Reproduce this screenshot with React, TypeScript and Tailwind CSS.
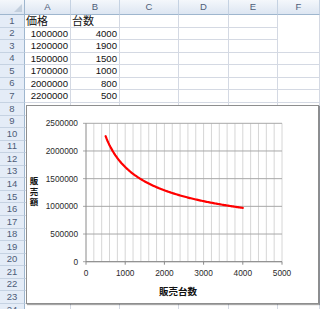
import React from 'react';

const colA = ['価格', '1000000', '1200000', '1500000', '1700000', '2000000', '2200000'];
const colB = ['台数', '4000', '1900', '1500', '1000', '800', '500'];
const letters = ['A', 'B', 'C', 'D', 'E', 'F'];
const ROWS = 24;

const num = "'Liberation Sans', Arial, sans-serif";
const jp = "'Noto Sans CJK JP', 'Liberation Sans', sans-serif";

// chart box inner origin on the page
const OX = 27;
const OY = 106;
const X = (u: number) => 86 + (u / 5000) * 196 - OX;
const Y = (v: number) => 261.7 - (v / 2500000) * 138.4 - OY;

const curve = (() => {
  const pts: string[] = [];
  for (let u = 500; u <= 4000; u += 25) {
    const v = Math.exp(0.4332 - 0.4073 * (Math.log(u) - 7.161)) * 1e6;
    pts.push(`${X(u).toFixed(2)},${Y(v).toFixed(2)}`);
  }
  return 'M' + pts.join(' L');
})();

const Chart: React.FC = () => {
  const vLines: number[] = [];
  for (let u = 200; u <= 5000; u += 200) vLines.push(u);
  const hVals = [0, 500000, 1000000, 1500000, 2000000, 2500000];
  const xVals = [0, 1000, 2000, 3000, 4000, 5000];
  return (
    <div className="absolute left-[26px] top-[105px] w-[293px] h-[199px] bg-white border border-[#8e8e8e] shadow-[1px_1px_1px_rgba(0,0,0,0.35)]">
      <svg width="291" height="197" className="block">
        {vLines.map((u) => (
          <line key={u} x1={X(u)} x2={X(u)} y1={Y(2500000)} y2={Y(0)} stroke="#d6d6d6" strokeWidth="1" />
        ))}
        {hVals.map((v) => (
          <line key={v} x1={X(0) - 3} x2={X(5000)} y1={Y(v)} y2={Y(v)} stroke="#a8a8a8" strokeWidth="1" />
        ))}
        <line x1={X(0)} x2={X(0)} y1={Y(2500000)} y2={Y(0)} stroke="#8a8a8a" strokeWidth="1" />
        <line x1={X(0)} x2={X(5000)} y1={Y(0)} y2={Y(0)} stroke="#8a8a8a" strokeWidth="1" />
        {xVals.map((u) => (
          <line key={u} x1={X(u)} x2={X(u)} y1={Y(0)} y2={Y(0) + 3} stroke="#8a8a8a" strokeWidth="1" />
        ))}
        {hVals.map((v) => (
          <text key={v} x={51} y={Y(v) + 3} textAnchor="end" fontSize="8.3" fill="#2a2a2a" fontFamily={num}>
            {v}
          </text>
        ))}
        {xVals.map((u) => (
          <text key={u} x={X(u)} y={170} textAnchor="middle" fontSize="8.3" fill="#2a2a2a" fontFamily={num}>
            {u}
          </text>
        ))}
        <path d={curve} fill="none" stroke="#ff0000" strokeWidth="2.2" strokeLinecap="round" />
        {['販', '売', '額'].map((c, i) => (
          <text key={c} x={7} y={78 + i * 10.5} textAnchor="middle" fontSize="8.5" fontWeight="700" fill="#111" fontFamily={jp}>
            {c}
          </text>
        ))}
        <text x={151} y={189} textAnchor="middle" fontSize="9.5" fontWeight="700" fill="#111" fontFamily={jp}>
          販売台数
        </text>
      </svg>
    </div>
  );
};

export default function App() {
  const rows = Array.from({ length: ROWS }, (_, i) => i + 1);
  return (
    <div className="relative w-[320px] h-[309px] overflow-hidden bg-white">
      <div className="grid grid-cols-[25px_46px_49px_59px_50px_49px_1fr] grid-rows-[15px_repeat(24,12.57px)]">
        <div className="relative bg-gradient-to-b from-[#f4f7fb] to-[#dde6f2] border-r border-b border-[#9eb6ce]">
          <div className="absolute right-[2px] bottom-[2px] w-0 h-0 border-l-[8px] border-l-transparent border-b-[8px] border-b-[#c3cfdd]" />
        </div>
        {letters.map((l) => (
          <div
            key={l}
            className="flex items-center justify-center bg-gradient-to-b from-[#f4f7fb] to-[#dde6f2] border-r border-b border-r-[#c5d2e2] border-b-[#9eb6ce] text-[9.5px] text-[#4e5d78]"
            style={{ fontFamily: num }}
          >
            {l}
          </div>
        ))}
        {rows.map((r) => (
          <React.Fragment key={r}>
            <div
              className="flex items-center justify-center bg-[#e4ecf7] border-r border-b border-r-[#9eb6ce] border-b-[#c5d2e2] text-[9.5px] text-[#4e5d78]"
              style={{ fontFamily: num }}
            >
              {r}
            </div>
            {letters.map((l, ci) => {
              const text = r <= 7 ? (ci === 0 ? colA[r - 1] : ci === 1 ? colB[r - 1] : '') : '';
              const isHead = r === 1;
              const noBottom = ci === 5 && r <= 2;
              return (
                <div
                  key={l}
                  className={`flex items-center border-r border-[#d4d9e3] ${noBottom ? '' : 'border-b'} ${
                    isHead ? 'justify-start pl-[1px] text-[11px]' : 'justify-end pr-[2px] text-[9.6px]'
                  } text-[#111] leading-none`}
                  style={{ fontFamily: isHead ? jp : num }}
                >
                  {text}
                </div>
              );
            })}
          </React.Fragment>
        ))}
      </div>
      <Chart />
    </div>
  );
}
